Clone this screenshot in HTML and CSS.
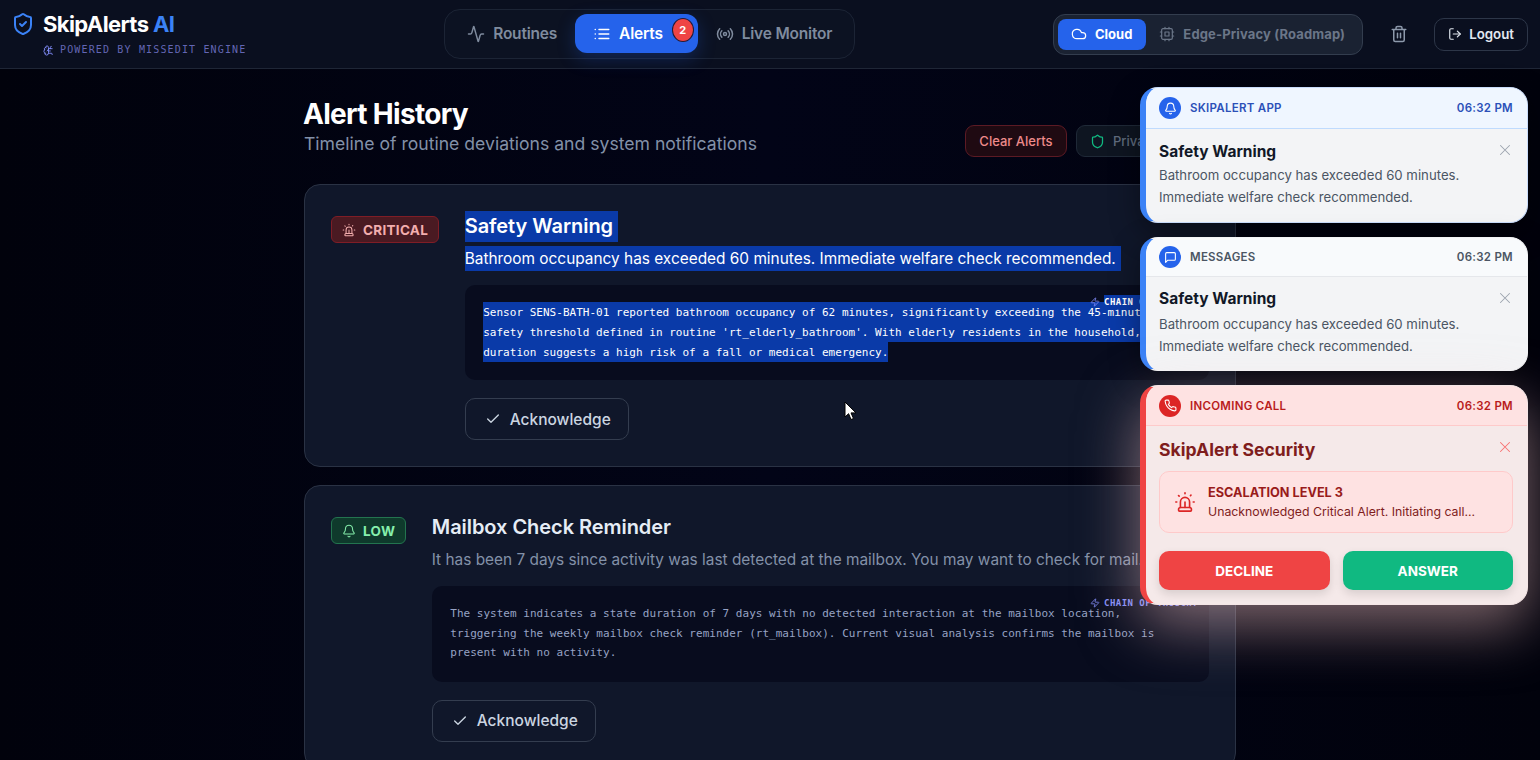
FILE: index.html
```html
<!DOCTYPE html>
<html lang="en">
<head>
  <meta charset="UTF-8" />
  <title>SkipAlerts AI</title>
  <link rel="stylesheet" href="styles.css">
</head>
<body>
  <!-- icon sprite -->
  <svg class="sprite" xmlns="http://www.w3.org/2000/svg">
    <symbol id="i-shield-check" viewBox="0 0 24 24"><path d="M20 13c0 5-3.500 7.500-7.660 8.950a1 1 0 0 1-.67-.01C7.500 20.500 4 18 4 13V6a1 1 0 0 1 1-1c2 0 4.500-1.200 6.240-2.720a1.170 1.170 0 0 1 1.520 0C14.510 3.810 17 5 19 5a1 1 0 0 1 1 1z"/><path d="m9 12 2 2 4-4"/></symbol>
    <symbol id="i-shield" viewBox="0 0 24 24"><path d="M20 13c0 5-3.500 7.500-7.660 8.950a1 1 0 0 1-.67-.01C7.500 20.500 4 18 4 13V6a1 1 0 0 1 1-1c2 0 4.500-1.200 6.240-2.720a1.170 1.170 0 0 1 1.520 0C14.510 3.810 17 5 19 5a1 1 0 0 1 1 1z"/></symbol>
    <symbol id="i-brain" viewBox="0 0 24 24"><path d="M12 5a3 3 0 1 0-5.997.125 4 4 0 0 0-2.526 5.770 4 4 0 0 0 .556 6.588A4 4 0 1 0 12 18Z"/><path d="M9 13a4.500 4.500 0 0 0 3-4"/><path d="M6.003 5.125A3 3 0 0 0 6.401 6.500"/><path d="M3.477 10.896a4 4 0 0 1 .585-.396"/><path d="M6 18a4 4 0 0 1-1.967-.516"/><path d="M12 13h4"/><path d="M12 18h6a2 2 0 0 1 2 2v1"/><path d="M12 8h8"/><path d="M16 8V5a2 2 0 0 1 2-2"/></symbol>
    <symbol id="i-activity" viewBox="0 0 24 24"><path d="M22 12h-2.480a2 2 0 0 0-1.930 1.460l-2.350 8.360a.25.25 0 0 1-.48 0L9.240 2.180a.25.25 0 0 0-.48 0l-2.350 8.360A2 2 0 0 1 4.490 12H2"/></symbol>
    <symbol id="i-list" viewBox="0 0 24 24"><path d="M3 12h.01M3 18h.01M3 6h.01M8 12h13M8 18h13M8 6h13"/></symbol>
    <symbol id="i-radio" viewBox="0 0 24 24"><path d="M4.900 19.100C1 15.200 1 8.800 4.900 4.900"/><path d="M7.800 16.200c-2.300-2.300-2.300-6.100 0-8.500"/><circle cx="12" cy="12" r="2"/><path d="M16.200 7.800c2.300 2.300 2.300 6.100 0 8.500"/><path d="M19.100 4.900C23 8.800 23 15.100 19.100 19"/></symbol>
    <symbol id="i-cloud" viewBox="0 0 24 24"><path d="M17.500 19H9a7 7 0 1 1 6.710-9h1.790a4.500 4.500 0 1 1 0 9Z"/></symbol>
    <symbol id="i-cpu" viewBox="0 0 24 24"><rect x="4" y="4" width="16" height="16" rx="2"/><rect x="9" y="9" width="6" height="6"/><path d="M15 2v2M15 20v2M2 15h2M2 9h2M20 15h2M20 9h2M9 2v2M9 20v2"/></symbol>
    <symbol id="i-trash" viewBox="0 0 24 24"><path d="M3 6h18M19 6v14c0 1-1 2-2 2H7c-1 0-2-1-2-2V6M8 6V4c0-1 1-2 2-2h4c1 0 2 1 2 2v2M10 11v6M14 11v6"/></symbol>
    <symbol id="i-logout" viewBox="0 0 24 24"><path d="M9 21H5a2 2 0 0 1-2-2V5a2 2 0 0 1 2-2h4"/><path d="m16 17 5-5-5-5"/><path d="M21 12H9"/></symbol>
    <symbol id="i-bell" viewBox="0 0 24 24"><path d="M10.268 21a2 2 0 0 0 3.464 0"/><path d="M3.262 15.326A1 1 0 0 0 4 17h16a1 1 0 0 0 .74-1.673C19.410 13.956 18 12.499 18 8A6 6 0 0 0 6 8c0 4.499-1.411 5.956-2.738 7.326"/></symbol>
    <symbol id="i-message" viewBox="0 0 24 24"><path d="M21 15a2 2 0 0 1-2 2H7l-4 4V5a2 2 0 0 1 2-2h14a2 2 0 0 1 2 2z"/></symbol>
    <symbol id="i-phone" viewBox="0 0 24 24"><path d="M22 16.920v3a2 2 0 0 1-2.180 2 19.790 19.790 0 0 1-8.630-3.070 19.500 19.500 0 0 1-6-6 19.790 19.790 0 0 1-3.070-8.670A2 2 0 0 1 4.110 2h3a2 2 0 0 1 2 1.720 12.840 12.840 0 0 0 .7 2.810 2 2 0 0 1-.45 2.110L8.090 9.910a16 16 0 0 0 6 6l1.270-1.270a2 2 0 0 1 2.110-.45 12.840 12.840 0 0 0 2.810.7A2 2 0 0 1 22 16.920z"/></symbol>
    <symbol id="i-siren" viewBox="0 0 24 24"><path d="M7 18v-6a5 5 0 1 1 10 0v6"/><path d="M5 21a1 1 0 0 0 1 1h12a1 1 0 0 0 1-1v-1a2 2 0 0 0-2-2H7a2 2 0 0 0-2 2z"/><path d="M21 12h1M18.500 4.500 18 5M2 12h1M12 2v1M4.929 4.929l.707.707M12 12v6"/></symbol>
    <symbol id="i-zap" viewBox="0 0 24 24"><path d="M4 14a1 1 0 0 1-.78-1.630l9.900-10.200a.5.5 0 0 1 .86.46l-1.920 6.020A1 1 0 0 0 13 10h7a1 1 0 0 1 .78 1.630l-9.900 10.200a.5.5 0 0 1-.86-.46l1.920-6.020A1 1 0 0 0 11 14z"/></symbol>
    <symbol id="i-check" viewBox="0 0 24 24"><path d="M20 6 9 17l-5-5"/></symbol>
    <symbol id="i-x" viewBox="0 0 24 24"><path d="M18 6 6 18M6 6l12 12"/></symbol>
  </svg>

  <header class="topbar">
    <div class="brand">
      <svg class="icon brand-icon"><use href="#i-shield-check"/></svg>
      <div>
        <div class="brand-name">SkipAlerts <span class="brand-ai">AI</span></div>
        <div class="brand-sub"><svg class="icon"><use href="#i-brain"/></svg>POWERED BY MISSEDIT ENGINE</div>
      </div>
    </div>

    <nav class="tabs">
      <a class="tab"><svg class="icon"><use href="#i-activity"/></svg>Routines</a>
      <a class="tab tab-active"><svg class="icon"><use href="#i-list"/></svg>Alerts<span class="tab-badge">2</span></a>
      <a class="tab"><svg class="icon"><use href="#i-radio"/></svg>Live Monitor</a>
    </nav>

    <div class="top-actions">
      <div class="mode-switch">
        <button class="mode mode-on"><svg class="icon"><use href="#i-cloud"/></svg>Cloud</button>
        <button class="mode"><svg class="icon"><use href="#i-cpu"/></svg>Edge-Privacy (Roadmap)</button>
      </div>
      <button class="trash"><svg class="icon"><use href="#i-trash"/></svg></button>
      <button class="logout"><svg class="icon"><use href="#i-logout"/></svg>Logout</button>
    </div>
  </header>

  <main class="content">
    <div class="page-head">
      <div>
        <h1>Alert History</h1>
        <p class="page-sub">Timeline of routine deviations and system notifications</p>
      </div>
      <div class="page-actions">
        <button class="btn-clear">Clear Alerts</button>
        <button class="btn-privacy"><svg class="icon"><use href="#i-shield"/></svg>Privacy Mode</button>
      </div>
    </div>

    <article class="alert-card">
      <span class="badge badge-critical"><svg class="icon"><use href="#i-siren"/></svg>CRITICAL</span>
      <div class="alert-body">
        <h3 class="alert-title sel-block">Safety Warning</h3>
        <p class="alert-desc sel-block">Bathroom occupancy has exceeded 60 minutes. Immediate welfare check recommended.</p>
        <div class="reason">
          <span class="reason-tag"><svg class="icon"><use href="#i-zap"/></svg><mark class="sel">CHAIN OF THOUGHT</mark></span>
          <p><mark class="sel">Sensor SENS-BATH-01 reported bathroom occupancy of 62 minutes, significantly exceeding the 45-minute safety threshold defined in routine 'rt_elderly_bathroom'. With elderly residents in the household, this duration suggests a high risk of a fall or medical emergency.</mark></p>
        </div>
        <button class="btn-ack"><svg class="icon"><use href="#i-check"/></svg>Acknowledge</button>
      </div>
    </article>

    <article class="alert-card">
      <span class="badge badge-low"><svg class="icon"><use href="#i-bell"/></svg>LOW</span>
      <div class="alert-body">
        <h3 class="alert-title">Mailbox Check Reminder</h3>
        <p class="alert-desc">It has been 7 days since activity was last detected at the mailbox. You may want to check for mail.</p>
        <div class="reason">
          <span class="reason-tag"><svg class="icon"><use href="#i-zap"/></svg>CHAIN OF THOUGHT</span>
          <p>The system indicates a state duration of 7 days with no detected interaction at the mailbox location, triggering the weekly mailbox check reminder (rt_mailbox). Current visual analysis confirms the mailbox is present with no activity.</p>
        </div>
        <button class="btn-ack"><svg class="icon"><use href="#i-check"/></svg>Acknowledge</button>
      </div>
    </article>
  </main>

  <aside class="toasts">
    <div class="toast toast-app">
      <div class="toast-head">
        <span class="toast-dot"><svg class="icon"><use href="#i-bell"/></svg></span>
        <span class="toast-src">SKIPALERT APP</span>
        <span class="toast-time">06:32 PM</span>
      </div>
      <div class="toast-body">
        <svg class="icon toast-close"><use href="#i-x"/></svg>
        <h4>Safety Warning</h4>
        <p>Bathroom occupancy has exceeded 60 minutes.<br>Immediate welfare check recommended.</p>
      </div>
    </div>

    <div class="toast toast-msg">
      <div class="toast-head">
        <span class="toast-dot"><svg class="icon"><use href="#i-message"/></svg></span>
        <span class="toast-src">MESSAGES</span>
        <span class="toast-time">06:32 PM</span>
      </div>
      <div class="toast-body">
        <svg class="icon toast-close"><use href="#i-x"/></svg>
        <h4>Safety Warning</h4>
        <p>Bathroom occupancy has exceeded 60 minutes.<br>Immediate welfare check recommended.</p>
      </div>
    </div>

    <div class="toast toast-call">
      <div class="toast-head">
        <span class="toast-dot"><svg class="icon"><use href="#i-phone"/></svg></span>
        <span class="toast-src">INCOMING CALL</span>
        <span class="toast-time">06:32 PM</span>
      </div>
      <div class="toast-body">
        <svg class="icon toast-close"><use href="#i-x"/></svg>
        <h4>SkipAlert Security</h4>
        <div class="escalation">
          <svg class="icon"><use href="#i-siren"/></svg>
          <div>
            <strong>ESCALATION LEVEL 3</strong>
            <span>Unacknowledged Critical Alert. Initiating call...</span>
          </div>
        </div>
        <div class="call-actions">
          <button class="btn-decline">DECLINE</button>
          <button class="btn-answer">ANSWER</button>
        </div>
      </div>
    </div>
  </aside>

  <!-- mouse pointer caught in the screenshot -->
  <svg class="pointer" width="13" height="20" viewBox="0 0 13 20"><path d="M1 1v15l3.600-3.300 2.400 5.800 2.500-1-2.500-5.600h5z" fill="#fff" stroke="#000" stroke-width="1"/></svg>
</body>
</html>
```

FILE: styles.css
```css
* { box-sizing: border-box; }
html, body { height: 100%; }
body {
  margin: 0;
  height: 760px;
  overflow: hidden;
  position: relative;
  font-family: Inter, "Liberation Sans", sans-serif;
  background: #02030f;
  background-image: linear-gradient(90deg, #01020c 0, #020417 50%, #01020c 100%);
  color: #e2e8f0;
}
p, h1, h3, h4 { margin: 0; }
button { font-family: inherit; cursor: pointer; }
.sprite { display: none; }
.icon {
  width: 18px;
  height: 18px;
  flex: none;
  fill: none;
  stroke: currentColor;
  stroke-width: 2;
  stroke-linecap: round;
  stroke-linejoin: round;
}

/* top bar */
.topbar {
  height: 69px;
  padding: 0 12px 0 14px;
  display: flex;
  align-items: center;
  justify-content: space-between;
  background: #0a0f1f;
  border-bottom: 1px solid #1f2636;
}
.brand { display: flex; gap: 8px; align-self: flex-start; padding-top: 11px; }
.brand-icon { width: 24px; height: 24px; margin: 1px 0 0 -3px; color: #3b82f6; }
.brand-name {
  font-size: 22px;
  font-weight: 700;
  line-height: 27px;
  letter-spacing: -0.6px;
  color: #fff;
}
.brand-ai { color: #3b82f6; }
.brand-sub {
  display: flex;
  align-items: center;
  gap: 6px;
  margin-top: 5px;
  font-family: "DejaVu Sans Mono", monospace;
  font-size: 10px;
  letter-spacing: 1.15px;
  line-height: 14px;
  color: #6366b4;
}
.brand-sub .icon { width: 11px; height: 11px; stroke-width: 2; color: #818cf8; }

.tabs {
  display: flex;
  align-items: flex-start;
  height: 50px;
  padding: 4px;
  border: 1px solid #1c2435;
  border-radius: 16px;
  background: #0c1222;
}
.tab {
  position: relative;
  display: flex;
  align-items: center;
  gap: 8px;
  height: 39px;
  padding: 0 18px;
  font-size: 15.5px;
  font-weight: 600;
  letter-spacing: -0.2px;
  color: #7f8b9e;
  border-radius: 12px;
}
.tab-active {
  padding-right: 35px;
  color: #fff;
  background: #2563eb;
  box-shadow: 0 6px 18px rgba(37, 99, 235, 0.25);
}
.tab-badge {
  position: absolute;
  top: 4px;
  right: 4px;
  width: 22px;
  height: 24px;
  border: 1px solid #1e1b3a;
  border-radius: 50%;
  background: #ef4444;
  color: #fff;
  font-size: 11px;
  font-weight: 700;
  letter-spacing: 0;
  line-height: 22px;
  text-align: center;
}

.top-actions { display: flex; align-items: center; }
.mode-switch {
  display: flex;
  height: 41px;
  padding: 4px;
  border: 1px solid #333d4e;
  border-radius: 12px;
  background: #1a2232;
}
.mode {
  display: flex;
  align-items: center;
  gap: 8px;
  padding: 0 13px;
  border: 0;
  border-radius: 8px;
  background: none;
  color: #6b7688;
  font-size: 13px;
  font-weight: 700;
  letter-spacing: 0.14px;
}
.mode .icon { width: 16px; height: 16px; stroke-width: 1.8; }
.mode-on { padding-right: 14px; background: #2563eb; color: #fff; letter-spacing: 0; }
.trash {
  display: flex;
  margin: 0 26px 0 27px;
  padding: 0;
  border: 0;
  background: none;
  color: #8d99ab;
}
.logout {
  display: flex;
  align-items: center;
  gap: 7px;
  height: 33px;
  padding: 0 13px;
  border: 1px solid #2d3648;
  border-radius: 10px;
  background: none;
  color: #e2e8f0;
  font-size: 13.3px;
  font-weight: 600;
}
.logout .icon { width: 14px; height: 14px; }

/* main column */
.content { width: 932px; margin: 0 auto; padding-top: 30px; }
.page-head {
  display: flex;
  justify-content: space-between;
  align-items: flex-end;
  margin-bottom: 27px;
}
h1 { font-size: 28px; font-weight: 700; line-height: 31px; letter-spacing: -0.7px; margin-left: -1px; color: #fff; }
.page-sub { font-size: 17.6px; line-height: 27px; color: #8391a8; }
.page-actions { display: flex; gap: 9px; }
.btn-clear, .btn-privacy {
  display: flex;
  align-items: center;
  height: 32px;
  border-radius: 9px;
  font-size: 13px;
  font-weight: 500;
}
.btn-clear {
  padding: 0 13.5px;
  border: 1px solid #5c1a24;
  background: #1f0a12;
  color: #ee8a8a;
}
.btn-privacy {
  gap: 8px;
  width: 160px;
  padding: 0 13px;
  border: 1px solid #1f2937;
  background: #0e1521;
  color: #5f6b7d;
}
.btn-privacy .icon { width: 15px; height: 15px; color: #10b981; }

.alert-card {
  display: flex;
  align-items: flex-start;
  gap: 25.5px;
  margin-bottom: 18px;
  padding: 26px;
  border: 1px solid #2a3244;
  border-radius: 16px;
  background: #10172a;
}
.badge {
  display: flex;
  align-items: center;
  gap: 7px;
  height: 27px;
  margin-top: 5px;
  padding: 0 10px;
  border-radius: 6px;
  font-size: 13.5px;
  font-weight: 700;
  letter-spacing: 0.3px;
  flex: none;
}
.badge .icon { width: 14px; height: 14px; stroke-width: 1.8; }
.badge-critical { border: 1px solid #7f1d26; background: #4a1a22; color: #f3aeae; }
.badge-low { border: 1px solid #23744f; background: #0f3a2c; color: #86efac; }
.alert-body { flex: 1; min-width: 0; }
.alert-title { font-size: 20px; font-weight: 600; line-height: 31px; letter-spacing: -0.05px; color: #e6edf6; }
.alert-desc { margin-top: 4px; font-size: 15.4px; line-height: 25px; color: #8391a8; }
.alert-body .alert-desc + .reason { margin-top: 14px; }
.sel-block {
  width: fit-content;
  padding-right: 5px;
  background: #0a3aa8;
  color: #fff;
}
.sel { background: #0a3aa8; color: #fff; padding: 3.500px 0; }
.reason {
  position: relative;
  padding: 17.500px 18px 18.500px 18.500px;
  border-radius: 10px;
  background: #080c1e;
  font-family: "DejaVu Sans Mono", monospace;
  font-size: 11px;
  letter-spacing: 0.02px;
  line-height: 19.800px;
  color: #97a3c4;
}
.reason-tag {
  position: absolute;
  top: 10px;
  right: 11px;
  display: flex;
  align-items: center;
  gap: 4px;
  font-size: 9px;
  font-weight: 700;
  letter-spacing: 0.45px;
  line-height: 14px;
  color: #818cf8;
}
.reason-tag .icon { width: 10px; height: 10px; }
.reason-tag .sel { padding: 0; }
.btn-ack {
  display: flex;
  align-items: center;
  gap: 9px;
  height: 42px;
  margin-top: 18px;
  padding: 0 17px 0 19px;
  border: 1px solid #343d4f;
  border-radius: 10px;
  background: none;
  color: #cbd5e1;
  font-size: 15.5px;
  font-weight: 500;
}
.btn-ack .icon { width: 16px; height: 16px; }

/* toast stack, over the page */
.toasts {
  position: absolute;
  top: 87px;
  right: 12px;
  width: 388px;
  display: flex;
  flex-direction: column;
  gap: 14px;
}
.toast {
  overflow: hidden;
  border: 1px solid #dbeafe;
  border-left: 6px solid #3b82f6;
  border-radius: 18px;
  background: #f3f4f6;
  box-shadow: 0 10px 30px rgba(0, 0, 0, 0.4);
}
.toast-head {
  display: flex;
  align-items: center;
  height: 40px;
  padding: 0 14px 0 13px;
  font-size: 11.500px;
  font-weight: 600;
  letter-spacing: 0.27px;
  border-bottom: 1px solid #e5e7eb;
}
.toast-dot {
  display: flex;
  align-items: center;
  justify-content: center;
  width: 22px;
  height: 22px;
  margin-right: 9px;
  border-radius: 50%;
  background: #2563eb;
  color: #fff;
}
.toast-dot .icon { width: 13px; height: 13px; }
.toast-time { margin-left: auto; }
.toast-body { position: relative; padding: 12px 14px 14px 13px; }
.toast-close {
  position: absolute;
  top: 12px;
  right: 13px;
  width: 18px;
  height: 18px;
  stroke-width: 1.400;
  color: #9ca3af;
}
.toast h4 { font-size: 15.500px; font-weight: 700; line-height: 22px; color: #111827; }
.toast-body p { margin-top: 1px; font-size: 13.200px; line-height: 22px; color: #4b5563; }
.toast-app { border-color: #c9dcfb; border-left-color: #3b82f6; }
.toast-app .toast-head { height: 41px; background: #eff6ff; border-bottom-color: #bfdbfe; color: #2b50b8; }
.toast-msg { border-color: #f3f4f6; border-left-color: #3b82f6; }
.toast-msg .toast-head { height: 39px; background: #f8fafc; color: #4b5563; }
.toast-msg .toast-body { padding-top: 11px; padding-bottom: 13px; }
.toast-msg .toast-body p { margin-top: 3px; }
.toast-call {
  border-color: #f5e6e6;
  border-left-color: #ef4444;
  background: #f5e9e9;
  box-shadow: 0 20px 60px rgba(254, 202, 202, 0.5);
}
.toast-call .toast-head { background: #fee2e2; border-bottom-color: #fecaca; color: #b91c1c; }
.toast-call .toast-dot { background: #dc2626; }
.toast-call h4 { font-size: 17.600px; line-height: 24px; color: #7f1d1d; }
.toast-call .toast-close { color: #f87171; }
.escalation {
  display: flex;
  align-items: center;
  gap: 12px;
  height: 62px;
  margin-top: 9px;
  padding: 0 14px;
  border: 1px solid #fecaca;
  border-radius: 10px;
  background: #fee2e2;
  color: #dc2626;
}
.escalation .icon { width: 22px; height: 22px; stroke-width: 1.800; }
.escalation strong { display: block; font-size: 12.700px; line-height: 19px; color: #991b1b; }
.escalation span { display: block; font-size: 12.300px; line-height: 19px; color: #7f1d1d; }
.call-actions { display: grid; grid-template-columns: 1fr 1fr; gap: 13px; margin-top: 18px; }
.call-actions button {
  height: 39px;
  border: 0;
  border-radius: 10px;
  color: #fff;
  font-size: 13.500px;
  font-weight: 700;
  box-shadow: 0 4px 10px rgba(0, 0, 0, 0.12);
}
.btn-decline { background: #ef4444; }
.btn-answer { background: #10b981; }

.pointer { position: absolute; left: 844px; top: 401px; }
```
